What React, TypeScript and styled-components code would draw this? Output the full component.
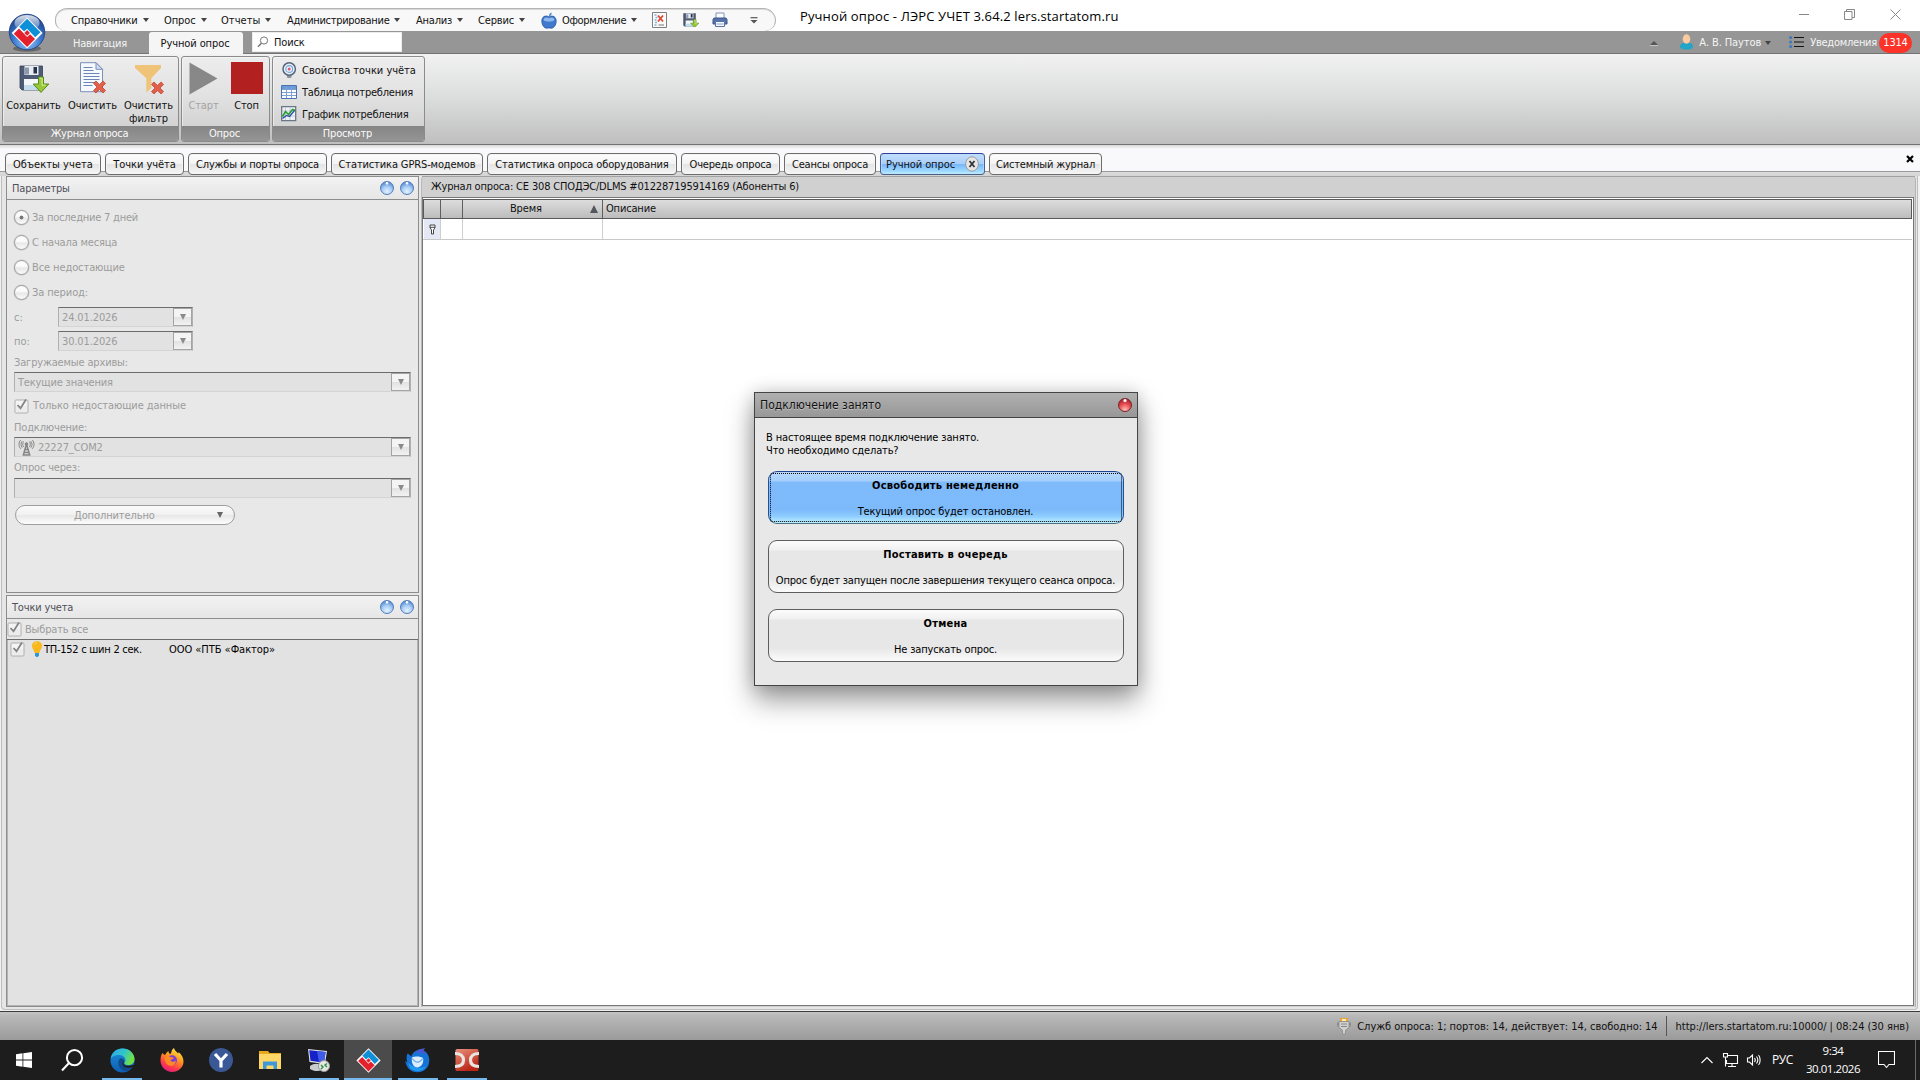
import React from 'react';
import styled, { createGlobalStyle, css } from 'styled-components';

const Global = createGlobalStyle`
  *, *::before, *::after { box-sizing: border-box; }
  html, body { margin: 0; padding: 0; }
  body {
    width: 1920px; height: 1080px; overflow: hidden; background: #fff; color: #111;
    font: 11px/13px "DejaVu Sans Condensed", "DejaVu Sans", "Noto Sans", sans-serif;
  }
  svg { display: block; flex: none; }
`;

const Label = styled.span<{ $ls?: number }>`
  letter-spacing: ${p => p.$ls ?? -0.17}px;
  white-space: nowrap;
  flex: none;
`;

const Screen = styled.div`
  width: 1920px; height: 1080px; display: flex; flex-direction: column; overflow: hidden;
  position: relative;
`;

/* ---------- title bar ---------- */
const TitleBar = styled.header`
  height: 31px; flex: none; display: flex; padding-left: 55px; background: #fff;
`;
const MenuPill = styled.nav`
  width: 721px; height: 23px; margin-top: 8px; padding-left: 15px; display: flex; align-items: center;
  background: #f8f8f8; border: 1px solid #b4b4b4; border-bottom: 0; border-top-width: 1px;
  box-shadow: inset 0 1px 0 #d9d9d9;
  border-radius: 13px 13px 12px 12px / 12px 13px 11px 10px;
`;
const MenuItem = styled.div<{ $w: number }>`
  width: ${p => p.$w}px; flex: none; display: flex; align-items: center; gap: 5px;
`;
const Caret = styled.i<{ $c?: string }>`
  width: 0; height: 0; border: 3.5px solid transparent; border-top: 4px solid ${p => p.$c || '#444'};
  border-bottom: 0; flex: none;
`;
const WindowTitle = styled.div`
  margin-left: 24px; padding-top: 7px; font: 13px/18px "Open Sans", "Noto Sans", sans-serif; color: #000;
  letter-spacing: 0.13px; white-space: nowrap; flex: 1;
`;
const WindowButtons = styled.div`
  display: flex; gap: 35px; padding: 9px 19px 0 0;
`;

/* ---------- ribbon tab strip ---------- */
const Strip = styled.div`
  height: 23px; flex: none; display: flex; align-items: flex-start; background: #969696;
  border-bottom: 1px solid #737373; color: #f4f4f4;
`;
const NavTab = styled.div`
  width: 149px; padding: 6px 0 0 73px; height: 22px;
`;
const ActiveNavTab = styled.div`
  width: 94px; height: 23px; margin-top: 1px; border-radius: 3px 3px 0 0; background: #f5f5f5; color: #111;
  display: flex; justify-content: center; padding: 5px 2px 0 0;
`;
const SearchBox = styled.div`
  width: 150px; height: 20px; margin: 1px 0 0 9px; border: 1px solid #ececec; background: #fff; color: #111;
  display: flex; align-items: center; gap: 5px; padding-left: 4px;
`;
const StripRight = styled.div`
  margin-left: auto; height: 22px; display: flex; align-items: center; padding-right: 8px;
`;
const CollapseMark = styled.i`
  border: 4px solid transparent; border-bottom: 4px solid #555; border-top: 0; margin: 2px 22px 0 0;
  box-shadow: 0 1px 0 #c6c6c6;
`;
const UserName = styled.div`
  display: flex; align-items: center; gap: 4px; margin: 1px 18px 0 6px;
`;
const Notices = styled.div`
  display: flex; align-items: center; margin-left: 6px; gap: 2px; padding-top: 1px;
`;
const Badge = styled.span`
  width: 33px; height: 20px; border-radius: 10px; background: #fd3229; color: #fff; display: flex;
  align-items: center; justify-content: center;
`;

/* ---------- ribbon ---------- */
const Ribbon = styled.section`
  height: 91px; flex: none; display: flex; gap: 2px; padding: 2px 0 0 2px;
  background: linear-gradient(#f2f2f2, #dcdddd 48%, #bfbfbf); border-bottom: 1px solid #737373;
`;
const Group = styled.div<{ $w: number }>`
  width: ${p => p.$w}px; height: 86px; display: flex; flex-direction: column; overflow: hidden;
  border: 1px solid #8b8b8b; border-radius: 3px;
  background: linear-gradient(#ededed, #e2e2e2 45%, #cbcbcb);
  box-shadow: inset 1px 1px 0 rgba(255,255,255,.45);
`;
const GroupBody = styled.div`
  flex: 1; display: flex;
`;
const GroupCaption = styled.div`
  height: 15px; display: flex; justify-content: center; color: #fafafa; padding: 1px 2px 0 0;
  background: linear-gradient(#858585, #959595);
`;
const BigButton = styled.div<{ $w: number; $off?: boolean }>`
  width: ${p => p.$w}px; display: flex; flex-direction: column; align-items: center; text-align: center;
  color: ${p => (p.$off ? '#a3a3a3' : '#111')};
`;
const BigIcon = styled.div`
  height: 42px; padding-top: 5px; display: flex; justify-content: center; align-items: flex-start;
`;
const LinkList = styled.div`
  display: flex; flex-direction: column; padding: 2px 0 0 8px;
`;
const LinkRow = styled.div`
  height: 22px; display: flex; align-items: center; gap: 5px;
`;
const LinkIcon = styled.div`
  width: 16px; display: flex; justify-content: center;
`;

/* ---------- document tabs ---------- */
const TabStrip = styled.div`
  height: 31px; flex: none; display: flex; align-items: flex-end; justify-content: space-between; padding-left: 5px;
  background: linear-gradient(#d8d8d8, #f9f9fb 4px, #f9f9fb 26px, #9a9a9a 26px, #9a9a9a 27px, #dcdcdc 27px, #d4d4d4);
`;
const Tabs = styled.div`
  display: flex; gap: 4px; height: 23px; 
`;
const Tab = styled.div<{ $w: number; $active?: boolean }>`
  width: ${p => p.$w}px; height: 22px; display: flex; align-items: center; justify-content: center;
  border: 1px solid #6c6c6c; border-radius: 4px; gap: 9px;
  background: linear-gradient(#fdfdfd, #f3f3f3 50%, #e4e4e4 52%, #f6f6f6);
  box-shadow: inset 0 0 0 1px #f4f4f4;
  ${p => p.$active && css`
    border-color: #2c3f9c #4a6290 #456080; gap: 10px;
    background: linear-gradient(#c2ddfb, #aacffa 48%, #77b7fb 52%, #a2dcff 88%, #c4f2ff);
    box-shadow: inset 0 0 0 1px rgba(190,222,255,.6);
  `}
`;
const CloseDoc = styled.div`
  align-self: flex-start; padding: 10px 6px 0 0;
`;

/* ---------- workspace ---------- */
const Workspace = styled.main`
  height: 836px; flex: none; display: flex; background: #f1f1f3; padding: 0 2px 0 1px;
  border-bottom: 1px solid #3b3b3b;
`;
const Frame = styled.div`
  flex: 1; display: flex; height: 834px; background: #e6e6e6; border: 1px solid #bdbdbd; border-top: 0;
  border-radius: 0 0 4px 4px; padding-left: 4px;
`;
const SideColumn = styled.aside`
  width: 413px; height: 831px; display: flex; flex-direction: column; gap: 2px;
`;
const Pane = styled.section<{ $h: number }>`
  height: ${p => p.$h}px; border: 1px solid #8d8d8d; background: #e8e8e8; display: flex; flex-direction: column;
`;
const PaneHead = styled.div`
  height: 23px; flex: none; display: flex; align-items: center; gap: 6px; padding: 0 4px 0 5px;
  background: linear-gradient(#f2f2f2, #e6e6e6); border-bottom: 1px solid #8d8d8d; color: #50505a;
`;
const Spring = styled.span`flex: 1;`;
const BlueOrb = styled.i`
  width: 14px; height: 14px; border-radius: 50%; border: 1px solid #517dbb;
  background: radial-gradient(circle at 50% 10%, #fff 0 8%, transparent 14%),
    radial-gradient(circle at 50% 80%, #e3f2ff, #a8ccf4 45%, #5b8ed6 80%);
`;
const Form = styled.div`
  color: #9c9c9c; display: flex; flex-direction: column; padding: 5px 7px 0 7px;
`;
const RadioRow = styled.div`
  height: 25px; display: flex; align-items: center; gap: 3px; 
`;
const Radio = styled.i<{ $on?: boolean }>`
  width: 15px; height: 15px; border-radius: 50%; border: 1px solid #9a9a9a; flex: none;
  background: ${p => p.$on ? 'radial-gradient(circle, #777 0 1.6px, transparent 2.3px),' : ''}
    linear-gradient(#fbfbfb 40%, #e8e8e8 55%, #fbfbfb);
  box-shadow: 0 0 0 .5px #c6c6c6;
`;
const DateRow = styled.div`
  height: 24px; display: flex; align-items: center; 
`;
const DateLabel = styled.div`
  width: 44px; padding-top: 1px;
`;
const Combo = styled.div<{ $w?: number }>`
  width: ${p => p.$w || 397}px; height: 20px; display: flex; align-items: center; background: #e2e2e2; gap: 3px;
  border: 1px solid #b0b0b0; border-top: 1px solid #6c6c6c; border-bottom-color: #d4d4d4; padding-left: 3px; flex: none;
`;
const ComboButton = styled.div`
  width: 19px; height: 18px; border: 1px solid #a4a4a4; margin-left: auto;
  background: linear-gradient(#f4f4f4 50%, #e2e2e2 52%, #f2f2f2); display: flex; align-items: center; justify-content: center;
`;
const TallCaret = styled.i<{ $c?: string }>`
  border: 3px solid transparent; border-top: 6px solid ${p => p.$c || '#8a8a8a'}; border-bottom: 0;
`;
const FieldLabel = styled.div<{ $h: number }>`
  height: ${p => p.$h}px; display: flex; align-items: center; padding-bottom: 1px;
`;
const CheckRow = styled.div<{ $h: number }>`
  height: ${p => p.$h}px; display: flex; align-items: center; gap: 4px;
`;
const MoreButton = styled.div`
  width: 220px; height: 20px; border-radius: 10px; border: 1px solid #9d9d9d; margin: 7px 0 0 1px;
  background: linear-gradient(#fbfbfb, #f1f1f1 48%, #e8e8e8 52%, #fcfcfc); display: flex; align-items: center;
  padding: 0 11px 0 58px; justify-content: space-between;
`;
const SelectAll = styled.div`
  height: 21px; flex: none; color: #9c9c9c; display: flex; align-items: center; gap: 3px; 
  border-bottom: 1px solid #6d6d6d;
`;
const PointRow = styled.div`
  flex: 1; background: #e2e2e2; border: 1px solid #b4b4b4; border-top: 0; padding: 1px 0 0 2px; display: flex;
  align-items: flex-start; color: #000;
`;
const PointName = styled.div`
  width: 125px; padding: 2px 0 0 0;
`;
const PointOwner = styled.div`
  padding-top: 2px;
`;
const BulbSlot = styled.div`
  padding: 0 1px 0 6px;
`;

const Main = styled.section`
  flex: 1; margin-left: 2px; display: flex; flex-direction: column; background: #d0d0d0; border-left: 1px solid #b9b9b9;
  border-right: 1px solid #b4b4b4; margin-right: 1px; height: 831px; border-radius: 4px 4px 0 0;
`;
const LogTitle = styled.div`
  height: 21px; flex: none; padding: 3px 0 0 9px; border-top: 1px solid #a2a2a2; 
`;
const Grid = styled.div`
  flex: 1; margin: 0 1px 1px 0; border: 1px solid #777; background: #fff; padding: 1px 1px 1px 0; 
`;
const GridHead = styled.div`
  height: 20px; display: grid; grid-template-columns: 17px 22px 140px 1fr; border: 1px solid #5a5a5a;
  background: linear-gradient(#dddddd, #bcbcbc);
`;
const HeadCell = styled.div<{ $center?: boolean }>`
  border-right: 1px solid #5f5f5f; display: flex; align-items: center; padding: 0 0 1px 3px;
  &:last-child { border-right: 0; }
  ${p => p.$center && css`padding: 0 4px 1px 47px; justify-content: space-between;`}
`;
const SortMark = styled.i`
  border: 4px solid transparent; border-bottom: 8px solid #53565a; border-top: 0;
`;
const FilterRow = styled.div`
  height: 21px; display: grid; grid-template-columns: 17px 22px 140px 1fr; padding-left: 1px;
  border-bottom: 1px solid #c8c8c8;
`;
const FilterCell = styled.div<{ $tint?: boolean }>`
  border-right: 1px solid #cfcfcf; background: ${p => (p.$tint ? '#e4e8f4' : '#fff')};
  display: flex; align-items: center; justify-content: center;
  &:last-child { border-right: 0; }
`;

/* ---------- status bar ---------- */
const StatusBar = styled.footer`
  height: 28px; flex: none; display: flex; align-items: center; justify-content: flex-end; padding: 0 11px 0 0;
  background: linear-gradient(#c4c4c4, #b8b8b8 4px, #9a9a9a);
`;
const StatusText = styled.div`
  margin-left: 6px; 
`;
const StatusSep = styled.i`
  width: 1px; height: 20px; background: #555; margin: 0 9px 0 8px;
`;

/* ---------- taskbar ---------- */
const TaskBar = styled.footer`
  height: 40px; flex: none; display: flex; background: #1d1d1d; color: #fff;
`;
const Task = styled.div<{ $run?: boolean; $active?: boolean }>`
  width: 48px; height: 40px; margin-right: 1.2px; display: flex; align-items: center; justify-content: center;
  ${p => p.$run && css`background: linear-gradient(#76b9ed, #76b9ed) 4px 38px / 40px 2px no-repeat;`}
  ${p => p.$active && css`background: linear-gradient(#4b4b4b 38px, #76b9ed 38px);`}
`;
const Tray = styled.div`
  margin-left: auto; display: flex; align-items: center; padding-right: 4px;
  font: 11.5px/18px "Open Sans", "Noto Sans", sans-serif;
`;
const Lang = styled.span`
  margin: 0 10px 0 11px; width: 24px; font-size: 12px; letter-spacing: -0.5px;
`;
const Clock = styled.div`
  width: 56px; text-align: center; letter-spacing: -0.45px; margin-right: 17px; margin-left: -1px; white-space: nowrap;
`;
const DesktopEdge = styled.i`
  width: 1px; height: 40px; background: #6b6b6b; margin-left: 20px;
`;

/* ---------- dialog ---------- */
const Dialog = styled.div`
  position: absolute; left: 754px; top: 392px; width: 384px; height: 294px; background: #e8e8e8;
  border: 1px solid #444; box-shadow: 0 14px 26px rgba(0,0,0,.4), 0 0 16px rgba(0,0,0,.16);
`;
const DialogHead = styled.div`
  height: 25px; display: flex; align-items: center; justify-content: space-between; padding: 1px 5px 0 5px;
  background: linear-gradient(#b0b0b0, #979797); border-bottom: 1px solid #444; font-size: 12px; color: #111;
  text-shadow: 0 1px 0 rgba(255,255,255,.35);
`;
const RedOrb = styled.i`
  width: 14px; height: 14px; border-radius: 50%; border: 1px solid #7c1f25; margin-top: -2px;
  background: radial-gradient(circle at 50% 12%, #fff 0 8%, transparent 18%),
    radial-gradient(circle at 50% 90%, #ffc0b8, #e5484e 50%, #8e1c22 95%);
`;
const DialogText = styled.div`
  display: flex; flex-direction: column; padding: 13px 0 0 11px; height: 53px; color: #000;
`;
const Choices = styled.div`
  display: flex; flex-direction: column; gap: 16px; padding: 0 13px;
`;
const Choice = styled.button<{ $primary?: boolean }>`
  height: 53px; border-radius: 9px; border: 1px solid #5e5e5e; padding: 7px 1px 0 0; color: #000; font: inherit;
  display: flex; flex-direction: column; align-items: center; gap: 13px; position: relative;
  background: linear-gradient(#fcfcfc, #f0f0f0 9px, #e7e7e7 10px, #e7e7e7 38px, #fbfbfb);
  ${p => p.$primary && css`
    border-color: #1f4691 #24509a #4a6d80;
    background: linear-gradient(#b9dafd, #a4cffc 9px, #7fbbfb 10px, #7cbafb 38px, #8dcbff 44px, #bff0ff);
    &::after { content: ''; position: absolute; inset: 1px; border: 1px dotted #000; border-radius: 3px; }
  `}
`;
const Strong = styled(Label)`font-weight: 700;`;

/* ---------- drawings ---------- */
const Orb = styled.div`
  position: absolute; left: 8px; top: 13px;
`;
const Chevrons = () => (
  <>
    <path d="M18 1.500 34.500 18 18 34.500 1.500 18z" fill="#fff" />
    <path d="M9.600 11.400 18 3 32.200 17.200 26.600 22.600 18 13.600 14.800 16.600z" fill="#0d90d8" />
    <path d="M26.400 24.600 18 33 3.800 18.800 9.400 13.400 18 22.400 21.200 19.400z" fill="#e3202b" />
    <path d="M18 15 21 18 18 21 15 18z" fill="#e3202b" />
  </>
);
const Logo = () => (
  <Orb>
    <svg width="38" height="40" viewBox="0 0 38 40">
      <defs>
        <radialGradient id="lg" cx=".5" cy=".75" r=".75">
          <stop offset="0" stopColor="#9fd0fa" /><stop offset=".5" stopColor="#3c7ad0" /><stop offset="1" stopColor="#173a80" />
        </radialGradient>
        <linearGradient id="lh" x1="0" y1="0" x2="0" y2="1"><stop offset="0" stopColor="#fff" stopOpacity=".85" /><stop offset="1" stopColor="#fff" stopOpacity=".1" /></linearGradient>
      </defs>
      <ellipse cx="19" cy="35.500" rx="14" ry="3.200" fill="#444" opacity=".55" />
      <circle cx="19" cy="19" r="17.800" fill="url(#lg)" stroke="#1d3f80" strokeWidth=".8" />
      <ellipse cx="19" cy="10" rx="12.500" ry="8" fill="url(#lh)" />
      <g transform="translate(2.200 3) scale(.94)"><Chevrons /></g>
    </svg>
  </Orb>
);
const Floppy = ({ s = 30 }: { s?: number }) => (
  <svg width={s} height={s * 28 / 30} viewBox="0 0 30 28">
    <path d="M1 1h22.500v24H3l-2-2z" fill="#4d5b74" stroke="#35415a" strokeWidth=".8" />
    <path d="M5.500 1h14v9h-14z" fill="#e9edf3" /><path d="M6 2.500h4v7H6z" fill="#8d9aae" /><path d="M14.500 2h3.500v6.500h-3.500z" fill="#27324a" />
    <path d="M5 14h14.500v11H5z" fill="#f4f8fb" /><path d="M5 20h14.500v5H5z" fill="#c3ddec" />
    <path d="M19.500 12h5v7h5.300L22 27.400 14.200 19h5.300z" fill="#96c83a" stroke="#5a8a1c" strokeWidth="1" />
    <path d="M20.700 13.200h2.400v7h3.400" fill="none" stroke="#d9f09a" strokeWidth="1" />
  </svg>
);
const FloppySlot = styled.div`
  padding: 3px 0 0 1px;
`;
const RedCross = ({ x, y }: { x: number; y: number }) => (
  <g transform={`translate(${x} ${y})`}>
    <path d="M2.400 0 6 3.400 9.600 0 12 2.400 8.500 6l3.500 3.600L9.600 12 6 8.600 2.400 12 0 9.600 3.500 6 0 2.400z" fill="#e2604a" stroke="#b93a2a" strokeWidth=".7" />
  </g>
);
const Page = () => (
  <svg width="28" height="32" viewBox="0 0 28 32">
    <path d="M1.500.700H17l6.500 6.600v22.400h-22z" fill="#f5f8fc" stroke="#7b8fb8" /><path d="M17 .700v6.600h6.500z" fill="#cfdcf0" stroke="#7b8fb8" />
    <path d="M4.500 5.500h9M4.500 8.500h10M4.500 11.500h16M4.500 14.500h16M4.500 17.500h16M4.500 20.500h12M4.500 23.500h9" stroke="#6d85b4" strokeWidth="1" />
    <RedCross x={14.5} y={19} />
  </svg>
);
const Funnel = () => (
  <svg width="30" height="32" viewBox="0 0 30 32">
    <path d="M1 3h26v3L17.300 16.200V26l-5 4.500V16.200L1 6z" fill="#efc478" /><RedCross x={17.5} y={20} />
  </svg>
);
const Play = () => <svg width="29" height="33" viewBox="0 0 29 33"><path d="M.5.500v32L28.500 16.500z" fill="#888" /></svg>;
const Stop = () => <svg width="32" height="32"><path d="M0 0h32v32H0z" fill="#b2201f" /></svg>;
const MeterIcon = () => (
  <svg width="15" height="17" viewBox="0 0 15 17">
    <path d="M4.500 11h5.500l-.8 5H5.300z" fill="#8d949c" /><circle cx="7.200" cy="7" r="6.200" fill="#e9f2fb" stroke="#586678" strokeWidth="1.500" />
    <circle cx="7.200" cy="7" r="3.400" fill="none" stroke="#6fa6de" strokeWidth="1.100" /><circle cx="7.200" cy="7" r="1.500" fill="#e05a70" />
  </svg>
);
const TableIcon = () => (
  <svg width="16" height="14" viewBox="0 0 16 14"><path d="M.5.500h15v13H.5z" fill="#fff" stroke="#4a72b4" /><path d="M1 1h14v3H1z" fill="#6a9ad8" /><path d="M1 4.500h14M1 7.500h14M1 10.500h14M5.500 1v12M10.500 1v12" stroke="#7fa2d4" /></svg>
);
const ChartIcon = () => (
  <svg width="16" height="16" viewBox="0 0 16 16"><path d="M.7.700h14v14H.7z" fill="#eef2f6" stroke="#6c7683" strokeWidth="1.300" /><path d="M4.500 1v13M9 1v13M1 5h13M1 10h13" stroke="#b4c2d4" strokeWidth=".8" /><path d="m1.500 10.500 3-5 3 3 4-5 3 1" fill="none" stroke="#2d9c34" strokeWidth="1.700" /><path d="m1.500 12.500 4-3 3 1 5-6" fill="none" stroke="#2a4fa4" strokeWidth="1.300" /></svg>
);
const Apple = () => (
  <svg width="16" height="17" viewBox="0 0 16 17">
    <path d="M8 5C6.500 3.500 1 3 .8 9c0 4 2.600 7.500 5 7.200 1.200-.3 3-.3 4.300 0 2.500.3 5.100-3.200 5.100-7C15 3 9.500 3.600 8 5z" fill="#3f78cc" stroke="#285aa8" strokeWidth=".8" />
    <path d="M2.500 8C3 5 6 5 8 6.200 10 5 13 5 13.500 8 12 10 4 10 2.500 8z" fill="#8fb8ee" /><path d="M8 4.500C8 2 9 .8 10.600.500 10.800 2.600 9.800 4 8 4.500z" fill="#4a86d6" />
  </svg>
);
const SheetX = () => (
  <svg width="15" height="16" viewBox="0 0 15 16"><path d="M.5.500h14v15H.5z" fill="#fafafa" stroke="#808080" /><path d="M2.500 3h2M3.500 5.500h2M2.500 8h2M3 10.500h2M2.500 13h2" stroke="#7fb4e0" strokeWidth="1.400" /><path d="M6.500 13h5.500" stroke="#777" /><path d="m6 3.500 5 6M11 3.500l-5 6" stroke="#e0482f" strokeWidth="1.800" /></svg>
);
const Printer = () => (
  <svg width="16" height="16" viewBox="0 0 16 16"><path d="M4 1h8v6H4z" fill="#fff" stroke="#8294b8" /><path d="M1 7.500 2 6h12l1 1.500V12H1z" fill="#5673a8" stroke="#39558c" /><path d="M3.500 9.500h9v5h-9z" fill="#f5f8fd" stroke="#5673a8" /><path d="M4.500 12h7" stroke="#8ba2cc" /></svg>
);
const MoreMark = () => <svg width="8" height="7" viewBox="0 0 8 7"><path d="M.5.700h7" stroke="#555" strokeWidth="1.200" /><path d="M.5 3h7L4 6.600z" fill="#555" /></svg>;
const Lens = () => <svg width="12" height="12" viewBox="0 0 12 12" fill="none" stroke="#777"><circle cx="7" cy="4.500" r="3.600" /><path d="M4.400 7.300 1 10.800" strokeWidth="1.500" /></svg>;
const Person = () => <svg width="13" height="16" viewBox="0 0 13 16"><path d="M0 13c0-3.500 3-4.500 6.500-4.500S13 9.500 13 13c0 3.500-13 3.500-13 0z" fill="#22a5c6" /><ellipse cx="6.500" cy="5" rx="3.800" ry="4.700" fill="#f9cba0" /></svg>;
const ListIcon = () => (
  <svg width="15" height="12" viewBox="0 0 15 12"><path d="M5 1.500h10M5 6h10M5 10.500h10" stroke="#111" /><circle cx="1.600" cy="1.600" r="1.500" fill="#3b78bd" /><circle cx="1.600" cy="6" r="1.500" fill="#3b78bd" /><circle cx="1.600" cy="10.400" r="1.500" fill="#3b78bd" /></svg>
);
const TabClose = () => <svg width="14" height="16" viewBox="0 0 14 16"><ellipse cx="7" cy="8" rx="6.400" ry="7.200" fill="#e5e5e5" stroke="#9b9b9b" /><path d="m4.500 5 5 6M9.500 5l-5 6" stroke="#333" strokeWidth="1.800" /></svg>;
const Check = () => (
  <svg width="15" height="16" viewBox="0 0 15 16"><rect x="1" y="2" width="13" height="13" rx="1" fill="#f4f4f4" stroke="#adadad" /><path d="M2 8h11v6H2z" fill="#ececec" /><path d="m3.500 7 3 3.200L12 1.500" fill="none" stroke="#858585" strokeWidth="1.800" /></svg>
);
const Bulb = () => (
  <svg width="12" height="16" viewBox="0 0 12 16"><path d="M6 .3c3 0 5 2 5 4.700 0 3-2.500 4-2.500 7h-5c0-3-2.500-4-2.500-7C1 2.300 3 .3 6 .3z" fill="#f9b81b" /><path d="M4 12h4v2.200L6.800 16H5.200L4 14.200z" fill="#2c9ad0" /><path d="M3.500 3.500C4 2.300 5 2 6 2" stroke="#fde28a" fill="none" /></svg>
);
const Antenna = () => (
  <svg width="17" height="17" viewBox="0 0 17 17" fill="none" stroke="#858585"><path d="M8.500 5 5.500 15.500M8.500 5l3 10.500M7 10.500h3M6 13.500h5M4.500 16h8" strokeWidth="1.500" /><circle cx="8.500" cy="5" r="1.300" fill="#858585" /><path d="M5.500 2.500c-1 1.500-1 4 0 5.500M2.800 1C.4 3 .4 7.500 2.800 9.800M4.200 2.200c-1.600 2-1.600 4.500 0 6.500M11.500 2.500c1 1.500 1 4 0 5.500M14.200 1c2.400 2 2.400 6.500 0 8.800M12.800 2.200c1.600 2 1.600 4.500 0 6.500" /></svg>
);
const Pin = () => <svg width="7" height="11" viewBox="0 0 7 11" fill="#fff" stroke="#333" strokeWidth=".9"><path d="M1 1h5v2.500L4.500 6v4h-2V6L1 3.500zM1 3.300h5" /></svg>;
const Plug = () => (
  <svg width="14" height="17" viewBox="0 0 14 17"><path d="M3 0h8v4H3z" fill="#e9a53a" /><path d="M5 1h4v2H5z" fill="#fff0b8" /><path d="M0 4.500h2v4H0zM12 4.500h2v4h-2z" fill="#8f8f8f" /><path d="M2 3.500h10v6L8.800 12l-.8 4.500H6L5.200 12 2 9.500z" fill="#d0d0d0" stroke="#868686" strokeWidth=".8" /><path d="M4 6h6M4 8.500h6" stroke="#888" /></svg>
);
const WindowsIcon = () => <svg width="16" height="16" viewBox="0 0 16 16" fill="#fff"><path d="M0 2.200 6.500 1.300v6.300H0zM7.300 1.200 16 0v7.600H7.300zM0 8.400h6.500v6.300L0 13.800zM7.300 8.400H16V16l-8.700-1.200z" /></svg>;
const SearchIcon = () => <svg width="25" height="23" viewBox="0 0 25 23" fill="none" stroke="#fff" strokeWidth="2"><circle cx="13.500" cy="8.700" r="7.600" /><path d="M8 14 1 21.500" /></svg>;
const Edge = () => (
  <svg width="25" height="25" viewBox="0 0 25 25">
    <defs><linearGradient id="e1" x1="0" y1="0" x2="1" y2=".4"><stop offset="0" stopColor="#2ea9e6" /><stop offset=".55" stopColor="#30c3cf" /><stop offset="1" stopColor="#6fe04a" /></linearGradient><linearGradient id="e2" x1="0" y1="0" x2="0" y2="1"><stop offset="0" stopColor="#1b8fdc" /><stop offset="1" stopColor="#0e5fb2" /></linearGradient></defs>
    <circle cx="12.500" cy="12.500" r="12" fill="url(#e2)" />
    <path d="M.6 11C1.500 4.500 6.500.500 12.500.500c7 0 12 5 12 10.500 0 4-3 6-6.500 6-3 0-4-1.200-3.500-2.200C17 12 14.500 7 9 7 5 7 1.500 9 .6 11z" fill="url(#e1)" />
    <path d="M9.500 11C6.500 15 9 22.500 16.500 23.300c3-.8 5.500-3 6.500-5.300-4 2.200-9.500 1.500-9.500-3 0-1 .8-1.600.500-2.500-.5-2-3.200-3-4.500-1.500z" fill="#124a8c" />
    <path d="M14 12.500c-1 1-1 3 0 4s3 1.500 5 1.200l5.500-.9-.5 2C20 20.500 13 20 12.500 15.500c0-1.500.500-2.500 1.500-3z" fill="#1d1d1d" />
  </svg>
);
const Firefox = () => (
  <svg width="24" height="24" viewBox="0 0 24 24">
    <defs><linearGradient id="f1" x1=".8" y1="0" x2=".3" y2="1"><stop offset="0" stopColor="#fff04a" /><stop offset=".4" stopColor="#ff9a1e" /><stop offset=".75" stopColor="#ff3c4c" /><stop offset="1" stopColor="#e4197f" /></linearGradient></defs>
    <path d="M2.500 5c.6 1 1.500 1.700 2.500 2 1-1 1.500-2.800 3.500-4 0 1.500.500 2.500 2 3 1.500-2 .5-4 3.500-6 .5 2.500 3 4 4 5.500.7-.5.500-1 .500-1.500 3 2.500 5 5.500 5 9.500C23.500 19.500 18 24 12 24S.5 19 .5 12.500C.5 9.500 1 7 2.500 5z" fill="url(#f1)" />
    <circle cx="12" cy="12.300" r="5" fill="#7a3fd8" /><path d="M5 9c2-1.500 4-1 5.500 0 1.500.3 2.500 0 3.500.8-1 1.700-3 1.200-3.500 2.700 1 2 4 1.500 5.500 0-.5 4-3 5.500-5.500 5.300C6.500 17.500 4 13 5 9z" fill="#ff8a22" />
  </svg>
);
const Yandex = () => <svg width="24" height="24" viewBox="0 0 24 24"><circle cx="12" cy="12" r="12" fill="#3b5896" /><path d="m6 6 6 6.500L18 6M12 12v7.500" fill="none" stroke="#fff" strokeWidth="3.200" /></svg>;
const Folder = () => <svg width="22" height="18" viewBox="0 0 22 18"><path d="M0 0h9l1.500 2H22v16H0z" fill="#e8a91c" /><path d="M0 3h22v15H0z" fill="#ffd766" /><path d="M4 18v-7.500h14V18h-3.500v-3.500h-7V18z" fill="#3d97db" /></svg>;
const Remote = () => (
  <svg width="24" height="24" viewBox="0 0 24 24"><path d="m1 1 19 2-2 13L2.500 14z" fill="#d9dde6" /><path d="m2.300 2.300 16.300 1.800-1.700 10.700-13.400-2z" fill="#1721c8" /><path d="m10 3 8.600 1.100-1.700 10.700L12 14z" fill="#3f5be8" /><path d="M3 18c4-3 9-3 12 0v4c-4 2-9 1-12-1z" fill="#c8ccd0" /><circle cx="17" cy="18" r="5.500" fill="#e6e8e6" stroke="#999" /><path d="m14 17 2 2-2 2M20 15.500l-2 1.500 2 2" stroke="#2b8f35" strokeWidth="1.400" fill="none" /></svg>
);
const LersIcon = () => <svg width="25" height="25" viewBox="1 1 34 34"><Chevrons /></svg>;
const Bird = () => (
  <svg width="25" height="25" viewBox="0 0 25 25">
    <path d="M2.500 5.500c1.500.5 2.500 1.500 3.500 3C8 4 12 1 20 .5c-.8.700-1.300 1.300-1.500 2 4 2 6 6 5.800 10.500C24 19.500 19 24.300 12.500 24.300S1 20 .3 12.500c.7 1 1.200 1.500 2 1.800-1-3.300-.8-6.300.2-8.800z" fill="#1673d6" />
    <path d="M9 6.500C12 3 17.500 3 20.500 7.500c.3-2-.8-3.600-2.500-5L20 .500C15 .800 11 3 9 6.500z" fill="#5a4fd0" />
    <path d="M3.500 15c0 5 4 8 9 8 4 0 7-2 9-5-4 2.500-12 3.500-18-3z" fill="#1e9bee" />
    <path d="M7 9.500c3-1.500 8-1.500 11 .5 1 4-1 9-5.500 9.500C8.500 19.300 6 15 7 9.500z" fill="#dcecfb" /><path d="M7.200 10.500c2 2.500 3.500 3.700 5.300 3.700s3.500-1.200 5.300-3.700" stroke="#62a7ea" strokeWidth="1.200" fill="none" />
  </svg>
);
const RedApp = () => (
  <svg width="24" height="22" viewBox="0 0 24 22"><defs><linearGradient id="r1" x1="0" y1="0" x2=".5" y2="1"><stop offset="0" stopColor="#e8907c" /><stop offset="1" stopColor="#bb2516" /></linearGradient></defs><rect x=".5" width="23" height="22" rx="1.500" fill="url(#r1)" /><path d="M0 4.500c5.500 0 8.500 2.500 8.500 6.500S5.500 17.500 0 17.500M24 4.500c-5.500 0-8.500 2.500-8.500 6.500s3 6.500 8.500 6.500" fill="none" stroke="#e8e4e0" strokeWidth="3.200" /></svg>
);

const menus: [string, number, number][] = [
  ['Справочники', 93, -0.2], ['Опрос', 57, -0.1], ['Отчеты', 66, 0.05], ['Администрирование', 129, -0.3],
  ['Анализ', 62, -0.2], ['Сервис', 63, -0.15],
];
const tabsBefore: [string, number, number][] = [
  ['Объекты учета', 96, 0.05], ['Точки учёта', 79, -0.05], ['Службы и порты опроса', 139, -0.17],
  ['Статистика GPRS-модемов', 152, -0.13], ['Статистика опроса оборудования', 190, -0.13],
  ['Очередь опроса', 99, -0.17], ['Сеансы опроса', 92, -0.17],
];
const radios: [string, boolean, number][] = [
  ['За последние 7 дней', true, -0.22], ['С начала месяца', false, -0.17], ['Все недостающие', false, -0.1], ['За период:', false, -0.1],
];

const ComboBox = ({ w, children }: { w?: number; children?: React.ReactNode }) => (
  <Combo $w={w}>{children}<ComboButton><TallCaret /></ComboButton></Combo>
);

export default function App() {
  return (
    <Screen>
      <Global />
      <TitleBar>
        <MenuPill>
          {menus.map(([t, w, ls]) => <MenuItem key={t} $w={w}><Label $ls={ls}>{t}</Label><Caret /></MenuItem>)}
          <MenuItem $w={110.5}><Apple /><Label $ls={-0.33}>Оформление</Label><Caret /></MenuItem>
          <MenuItem $w={31}><SheetX /></MenuItem>
          <MenuItem $w={29}><Floppy s={16} /></MenuItem>
          <MenuItem $w={38}><Printer /></MenuItem>
          <MoreMark />
        </MenuPill>
        <WindowTitle>Ручной опрос - ЛЭРС УЧЕТ 3.64.2 lers.startatom.ru</WindowTitle>
        <WindowButtons>
          <svg width="11" height="11" stroke="#888"><path d="M1 5.500h10" /></svg>
          <svg width="11" height="11" fill="none" stroke="#888"><path d="M.5 2.500h7.500v8H.5zM2.500 2.500v-2h8v8H8" /></svg>
          <svg width="11" height="11" stroke="#888"><path d="m.5.500 10 10M10.500.500l-10 10" /></svg>
        </WindowButtons>
      </TitleBar>

      <Strip>
        <NavTab><Label $ls={-0.24}>Навигация</Label></NavTab>
        <ActiveNavTab><Label $ls={-0.09}>Ручной опрос</Label></ActiveNavTab>
        <SearchBox><Lens /><Label>Поиск</Label></SearchBox>
        <StripRight>
          <CollapseMark />
          <Person />
          <UserName><Label $ls={-0.1}>А. В. Паутов</Label><Caret $c="#444" /></UserName>
          <ListIcon />
          <Notices><Label $ls={-0.25}>Уведомления</Label><Badge><Label $ls={-0.2}>1314</Label></Badge></Notices>
        </StripRight>
      </Strip>

      <Ribbon>
        <Group $w={177}>
          <GroupBody>
            <BigButton $w={61}><BigIcon><FloppySlot><Floppy /></FloppySlot></BigIcon><Label $ls={-0.13}>Сохранить</Label></BigButton>
            <BigButton $w={57}><BigIcon><Page /></BigIcon><Label $ls={-0.04}>Очистить</Label></BigButton>
            <BigButton $w={55}><BigIcon><Funnel /></BigIcon><Label $ls={-0.04}>Очистить<br />фильтр</Label></BigButton>
          </GroupBody>
          <GroupCaption><Label $ls={-0.28}>Журнал опроса</Label></GroupCaption>
        </Group>
        <Group $w={89}>
          <GroupBody>
            <BigButton $w={43} $off><BigIcon><Play /></BigIcon><Label>Старт</Label></BigButton>
            <BigButton $w={43}><BigIcon><Stop /></BigIcon><Label>Стоп</Label></BigButton>
          </GroupBody>
          <GroupCaption><Label>Опрос</Label></GroupCaption>
        </Group>
        <Group $w={153}>
          <GroupBody>
            <LinkList>
              <LinkRow><LinkIcon><MeterIcon /></LinkIcon><Label $ls={-0.02}>Свойства точки учёта</Label></LinkRow>
              <LinkRow><LinkIcon><TableIcon /></LinkIcon><Label $ls={-0.21}>Таблица потребления</Label></LinkRow>
              <LinkRow><LinkIcon><ChartIcon /></LinkIcon><Label $ls={-0.22}>График потребления</Label></LinkRow>
            </LinkList>
          </GroupBody>
          <GroupCaption><Label>Просмотр</Label></GroupCaption>
        </Group>
      </Ribbon>

      <TabStrip>
        <Tabs>
          {tabsBefore.map(([t, w, ls]) => <Tab key={t} $w={w}><Label $ls={ls}>{t}</Label></Tab>)}
          <Tab $w={105} $active><Label $ls={-0.09}>Ручной опрос</Label><TabClose /></Tab>
          <Tab $w={113}><Label>Системный журнал</Label></Tab>
        </Tabs>
        <CloseDoc><svg width="8" height="8" stroke="#000" strokeWidth="2.200"><path d="m1 1 6 6M7 1 1 7" /></svg></CloseDoc>
      </TabStrip>

      <Workspace>
        <Frame>
          <SideColumn>
            <Pane $h={417}>
              <PaneHead><Label>Параметры</Label><Spring /><BlueOrb /><BlueOrb /></PaneHead>
              <Form>
                {radios.map(([t, on, ls]) => <RadioRow key={t}><Radio $on={on} /><Label $ls={ls}>{t}</Label></RadioRow>)}
                <DateRow><DateLabel>с:</DateLabel><ComboBox w={135}><Label $ls={-0.12}>24.01.2026</Label></ComboBox></DateRow>
                <DateRow><DateLabel>по:</DateLabel><ComboBox w={135}><Label $ls={-0.12}>30.01.2026</Label></ComboBox></DateRow>
                <FieldLabel $h={19}><Label $ls={-0.16}>Загружаемые архивы:</Label></FieldLabel>
                <ComboBox><Label>Текущие значения</Label></ComboBox>
                <CheckRow $h={27}><Check /><Label $ls={-0.09}>Только недостающие данные</Label></CheckRow>
                <FieldLabel $h={18}><Label>Подключение:</Label></FieldLabel>
                <ComboBox><Antenna /><Label $ls={-0.12}>22227_COM2</Label></ComboBox>
                <FieldLabel $h={21}><Label>Опрос через:</Label></FieldLabel>
                <ComboBox />
                <MoreButton><Label $ls={-0.1}>Дополнительно</Label><TallCaret $c="#666" /></MoreButton>
              </Form>
            </Pane>
            <Pane $h={412}>
              <PaneHead><Label>Точки учета</Label><Spring /><BlueOrb /><BlueOrb /></PaneHead>
              <SelectAll><Check /><Label>Выбрать все</Label></SelectAll>
              <PointRow>
                <Check /><BulbSlot><Bulb /></BulbSlot>
                <PointName><Label $ls={-0.26}>ТП-152 с шин 2 сек.</Label></PointName>
                <PointOwner><Label $ls={-0.04}>ООО «ПТБ «Фактор»</Label></PointOwner>
              </PointRow>
            </Pane>
          </SideColumn>
          <Main>
            <LogTitle><Label $ls={-0.17}>Журнал опроса: СЕ 308 СПОДЭС/DLMS #012287195914169 (Абоненты 6)</Label></LogTitle>
            <Grid>
              <GridHead>
                <HeadCell /><HeadCell />
                <HeadCell $center><Label>Время</Label><SortMark /></HeadCell>
                <HeadCell><Label>Описание</Label></HeadCell>
              </GridHead>
              <FilterRow><FilterCell $tint><Pin /></FilterCell><FilterCell /><FilterCell /><FilterCell /></FilterRow>
            </Grid>
          </Main>
        </Frame>
      </Workspace>

      <StatusBar>
        <Plug />
        <StatusText><Label $ls={-0.03}>Служб опроса: 1; портов: 14, действует: 14, свободно: 14</Label></StatusText>
        <StatusSep />
        <Label $ls={-0.03}>http://lers.startatom.ru:10000/ | 08:24 (30 янв)</Label>
      </StatusBar>

      <TaskBar>
        <Task><WindowsIcon /></Task>
        <Task><SearchIcon /></Task>
        <Task $run><Edge /></Task>
        <Task><Firefox /></Task>
        <Task><Yandex /></Task>
        <Task><Folder /></Task>
        <Task $run><Remote /></Task>
        <Task $active><LersIcon /></Task>
        <Task $run><Bird /></Task>
        <Task $run><RedApp /></Task>
        <Tray>
          <svg width="60" height="16" viewBox="0 0 60 16" fill="none" stroke="#fff" strokeWidth="1.100">
            <path d="m.5 11 5.500-5.500L11.500 11" />
            <path d="M26 3.500h10.500v8H25.500V8M31 11.500v3M27 14.500h8M22.500 1.500h4v3.500h-4zM24.500 5v9.500" />
            <path d="M46.500 6h2l3-3v10l-3-3h-2zM53.500 6c.8 1 .8 3 0 4M55.500 4.500c1.500 2 1.500 5 0 7M57.500 3c2.200 2.500 2.200 7.500 0 10" />
          </svg>
          <Lang>РУС</Lang>
          <Clock>9:34<br />30.01.2026</Clock>
          <svg width="17" height="18" viewBox="0 0 17 18" fill="none" stroke="#fff" strokeWidth="1.100"><path d="M.5.500h16v13h-5.500l-2.500 3-2.500-3H.5z" /></svg>
          <DesktopEdge />
        </Tray>
      </TaskBar>

      <Logo />
      <Dialog>
        <DialogHead><Label $ls={0.02}>Подключение занято</Label><RedOrb /></DialogHead>
        <DialogText>
          <Label $ls={-0.13}>В настоящее время подключение занято.</Label>
          <Label $ls={-0.15}>Что необходимо сделать?</Label>
        </DialogText>
        <Choices>
          <Choice $primary><Strong $ls={0.23}>Освободить немедленно</Strong><Label $ls={-0.15}>Текущий опрос будет остановлен.</Label></Choice>
          <Choice><Strong $ls={0.23}>Поставить в очередь</Strong><Label $ls={-0.17}>Опрос будет запущен после завершения текущего сеанса опроса.</Label></Choice>
          <Choice><Strong $ls={0.23}>Отмена</Strong><Label $ls={-0.15}>Не запускать опрос.</Label></Choice>
        </Choices>
      </Dialog>
    </Screen>
  );
}
